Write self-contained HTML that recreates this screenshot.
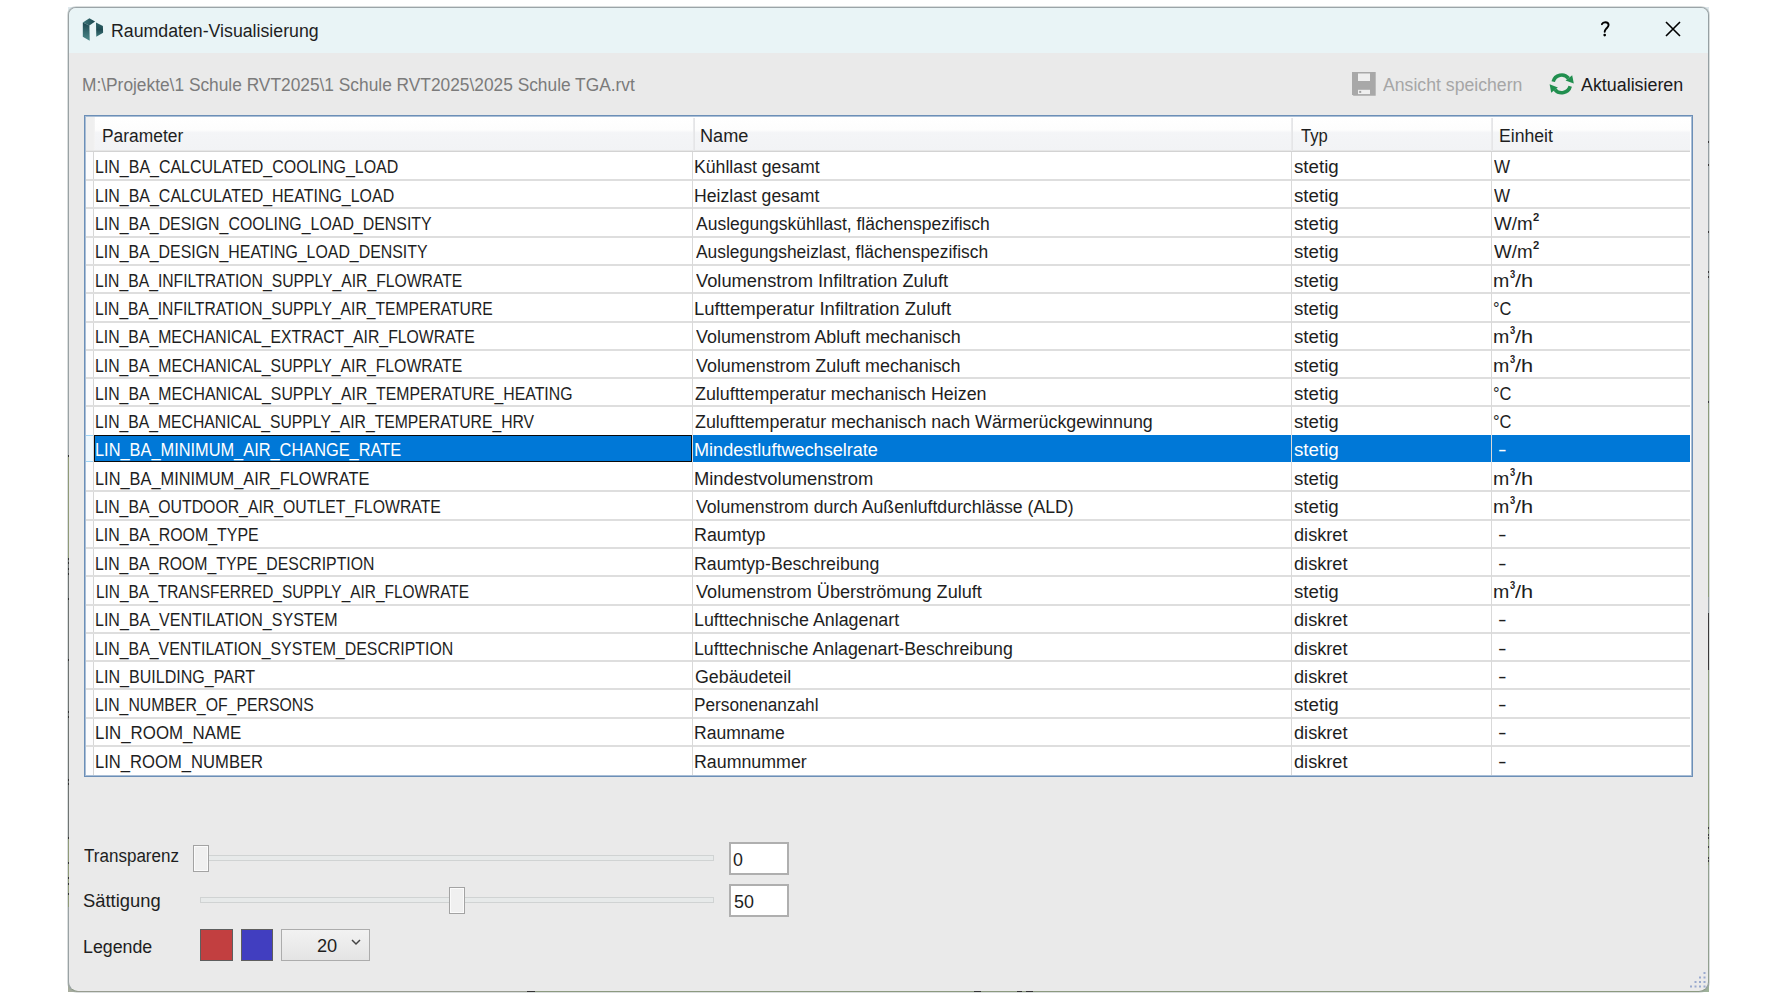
<!DOCTYPE html>
<html><head><meta charset="utf-8">
<style>
html,body{margin:0;padding:0;width:1778px;height:1000px;overflow:hidden;background:#fff;}
body{position:relative;font-family:"Liberation Sans",sans-serif;}
.abs{position:absolute;}
.t{position:absolute;white-space:pre;transform-origin:0 0;font-family:"Liberation Sans",sans-serif;}
#win{position:absolute;left:68px;top:7px;width:1639px;height:983px;border:1px solid;border-color:#9ba4a8 #96a0a3 #8a9884 #9aa2a4;box-shadow:0 0 0 1px rgba(150,160,160,0.35);border-radius:8px 8px 10px 10px;overflow:hidden;background:#eaeaea;}
#title{position:absolute;left:0;top:0;width:100%;height:45px;background:#e9f4f6;}
#table{position:absolute;left:84px;top:115px;width:1607px;height:660px;border:1px solid #6c8fb7;box-shadow:inset 0 0 0 1px #a9bed6;background:#fff;}
.hl{position:absolute;left:86px;width:1604px;height:2px;background:#dedede;}
.vl{position:absolute;width:1px;background:#d9d9d9;}
</style></head><body>
<div class="abs" style="left:68px;top:7px;width:10px;height:10px;background:#dfe8ec;"></div>
<div class="abs" style="left:1699px;top:7px;width:10px;height:10px;background:#dfe8ec;"></div>
<div class="abs" style="left:68px;top:982px;width:10px;height:10px;background:#a9ae9f;"></div>
<div class="abs" style="left:1699px;top:982px;width:10px;height:10px;background:#9fb39a;"></div>
<div id="win">
  <div id="title"></div>
</div>
<!-- border segments -->
<div class="abs" style="left:1708px;top:300px;width:1px;height:297px;background:#8c9c7c;"></div>
<div class="abs" style="left:1708px;top:613px;width:1px;height:57px;background:#3a3a3a;"></div>
<div class="abs" style="left:1708px;top:670px;width:1px;height:195px;background:#8c9c7c;"></div>
<div class="abs" style="left:1708px;top:865px;width:1px;height:118px;background:#92a090;"></div>
<div class="abs" style="left:68px;top:455px;width:1px;height:104px;background:#8f9a78;"></div>
<div class="abs" style="left:68px;top:559px;width:1px;height:278px;background:#6f7473;"></div>
<div class="abs" style="left:68px;top:837px;width:1px;height:70px;background:#8f9a78;"></div>
<div class="abs" style="left:535px;top:991px;width:1163px;height:1px;background:#8c9a80;"></div>
<div class="abs" style="left:76px;top:991px;width:451px;height:1px;background:#979c90;"></div>
<div class="abs" style="left:527px;top:991px;width:8px;height:1px;background:#333;"></div>
<div class="abs" style="left:974px;top:991px;width:7px;height:1px;background:#333;"></div>
<div class="abs" style="left:1017px;top:991px;width:5px;height:1px;background:#333;"></div>
<div class="abs" style="left:1026px;top:991px;width:7px;height:1px;background:#333;"></div>
<div class="abs" style="left:1708px;top:141px;width:1px;height:2px;background:#3a3a3a;"></div>
<div class="abs" style="left:1708px;top:164px;width:1px;height:2px;background:#3a3a3a;"></div>
<div class="abs" style="left:1708px;top:231px;width:1px;height:2px;background:#3a3a3a;"></div>
<div class="abs" style="left:1708px;top:271px;width:1px;height:2px;background:#3a3a3a;"></div>
<div class="abs" style="left:1708px;top:276px;width:1px;height:2px;background:#3a3a3a;"></div>
<div class="abs" style="left:1708px;top:401px;width:1px;height:2px;background:#3a3a3a;"></div>
<div class="abs" style="left:1708px;top:827px;width:1px;height:2px;background:#3a3a3a;"></div>
<div class="abs" style="left:1708px;top:834px;width:1px;height:2px;background:#3a3a3a;"></div>
<div class="abs" style="left:1708px;top:837px;width:1px;height:2px;background:#3a3a3a;"></div>
<div class="abs" style="left:1708px;top:846px;width:1px;height:2px;background:#3a3a3a;"></div>
<div class="abs" style="left:1708px;top:857px;width:1px;height:2px;background:#3a3a3a;"></div>
<div class="abs" style="left:1708px;top:860px;width:1px;height:2px;background:#3a3a3a;"></div>
<div class="abs" style="left:68px;top:455px;width:1px;height:2px;background:#333;"></div>
<div class="abs" style="left:68px;top:558px;width:1px;height:2px;background:#333;"></div>
<div class="abs" style="left:68px;top:562px;width:1px;height:2px;background:#333;"></div>
<div class="abs" style="left:68px;top:568px;width:1px;height:2px;background:#333;"></div>
<div class="abs" style="left:68px;top:573px;width:1px;height:2px;background:#333;"></div>
<div class="abs" style="left:68px;top:598px;width:1px;height:2px;background:#333;"></div>
<div class="abs" style="left:68px;top:659px;width:1px;height:2px;background:#333;"></div>
<div class="abs" style="left:68px;top:711px;width:1px;height:2px;background:#333;"></div>
<div class="abs" style="left:68px;top:716px;width:1px;height:2px;background:#333;"></div>
<div class="abs" style="left:68px;top:779px;width:1px;height:2px;background:#333;"></div>
<div class="abs" style="left:68px;top:783px;width:1px;height:2px;background:#333;"></div>
<div class="abs" style="left:68px;top:837px;width:1px;height:2px;background:#333;"></div>
<div class="abs" style="left:68px;top:862px;width:1px;height:2px;background:#333;"></div>
<div class="abs" style="left:68px;top:877px;width:1px;height:2px;background:#333;"></div>
<div class="abs" style="left:68px;top:883px;width:1px;height:2px;background:#333;"></div>
<div class="abs" style="left:68px;top:893px;width:1px;height:2px;background:#333;"></div>
<!-- resize grip -->
<svg class="abs" style="left:1688px;top:970px" width="18" height="18" viewBox="0 0 18 18"><g fill="#9aaace"><rect x="15.5" y="2.0" width="2" height="2"/><rect x="11.0" y="6.5" width="2" height="2"/><rect x="15.5" y="6.5" width="2" height="2"/><rect x="6.5" y="11.0" width="2" height="2"/><rect x="11.0" y="11.0" width="2" height="2"/><rect x="15.5" y="11.0" width="2" height="2"/><rect x="2.0" y="15.5" width="2" height="2"/><rect x="6.5" y="15.5" width="2" height="2"/><rect x="11.0" y="15.5" width="2" height="2"/><rect x="15.5" y="15.5" width="2" height="2"/></g></svg>
<div id="table"></div>
<!-- header -->
<div class="abs" style="left:86px;top:117px;width:1604px;height:34px;background:linear-gradient(#ffffff 0%,#fdfdfd 38%,#f4f5f7 46%,#f2f3f5 100%);"></div>
<div class="abs" style="left:86px;top:117px;width:9px;height:34px;background:linear-gradient(90deg,#efefef 0%,#efefef 80%,#f4f4f4 100%);"></div>
<div class="abs" style="left:86px;top:151px;width:1604px;height:1px;background:#d3d3d3;"></div>
<div class="abs" style="left:86px;top:150px;width:1604px;height:1px;background:#e6e6e6;"></div>
<!-- row header column -->
<div class="abs" style="left:86px;top:152px;width:7px;height:623px;background:#fcfcfd;"></div>
<div class="vl" style="left:93px;top:152px;height:623px;background:#d6d6d6;"></div>
<div class="abs" style="left:693px;top:118px;width:2px;height:33px;background:linear-gradient(90deg,#ececee,#e2e3e5);"></div>
<div class="abs" style="left:1291px;top:118px;width:2px;height:33px;background:linear-gradient(90deg,#ececee,#e2e3e5);"></div>
<div class="abs" style="left:1491px;top:118px;width:2px;height:33px;background:linear-gradient(90deg,#ececee,#e2e3e5);"></div>
<div class="hl" style="top:179px"></div>
<div class="hl" style="top:207px"></div>
<div class="hl" style="top:236px"></div>
<div class="hl" style="top:264px"></div>
<div class="hl" style="top:292px"></div>
<div class="hl" style="top:321px"></div>
<div class="hl" style="top:349px"></div>
<div class="hl" style="top:377px"></div>
<div class="hl" style="top:405px"></div>
<div class="hl" style="top:490px"></div>
<div class="hl" style="top:519px"></div>
<div class="hl" style="top:547px"></div>
<div class="hl" style="top:575px"></div>
<div class="hl" style="top:604px"></div>
<div class="hl" style="top:632px"></div>
<div class="hl" style="top:660px"></div>
<div class="hl" style="top:688px"></div>
<div class="hl" style="top:717px"></div>
<div class="hl" style="top:745px"></div>
<div class="vl" style="left:692px;top:152px;height:623px;"></div>
<div class="vl" style="left:1291px;top:152px;height:623px;"></div>
<div class="vl" style="left:1491px;top:152px;height:623px;"></div>
<!-- selection -->
<div class="abs" style="left:94px;top:435px;width:1596px;height:27px;background:#0078d7;"></div>
<div class="vl" style="left:692px;top:435px;height:27px;background:#d9d9d9;"></div>
<div class="vl" style="left:1291px;top:435px;height:27px;background:#d9d9d9;"></div>
<div class="vl" style="left:1491px;top:435px;height:27px;background:#d9d9d9;"></div>
<div class="abs" style="left:94px;top:435px;width:596px;height:25px;border:1px solid #0a0a0a;"></div>
<div class="abs" style="left:86px;top:435px;width:7px;height:27px;background:#eef7fd;border-top:1px solid #9fd3f5;border-bottom:1px solid #9fd3f5;box-sizing:border-box;"></div>
<!-- app icon -->
<svg class="abs" style="left:80px;top:16px" width="26" height="28" viewBox="0 0 26 28">
  <defs>
  <linearGradient id="g0" x1="0" y1="0" x2="1" y2="0"><stop offset="0" stop-color="#3f7a7d"/><stop offset="1" stop-color="#1a444c"/></linearGradient>
  <linearGradient id="g1" x1="0" y1="0" x2="0" y2="1"><stop offset="0" stop-color="#1c4750"/><stop offset="1" stop-color="#4e8b8c"/></linearGradient>
  <linearGradient id="g2" x1="0" y1="0" x2="0" y2="1"><stop offset="0" stop-color="#2f6469"/><stop offset="0.5" stop-color="#1f4b52"/><stop offset="1" stop-color="#40797c"/></linearGradient></defs>
  <path d="M2.8 6.5 L9.4 2.2 L15.1 5.5 L9.4 9.5 Z" fill="url(#g0)"/>
  <path d="M2.8 6.6 L9.4 9.4 L9.7 24.7 L2.8 20.8 Z" fill="url(#g1)"/>
  <path d="M16 6.4 L22.9 10 L23.1 16.8 L16.3 20.8 Z" fill="url(#g2)"/>
</svg>
<!-- help ? -->
<svg class="abs" style="left:1598px;top:18px" width="14" height="22" viewBox="0 0 14 22">
  <path d="M3.9 6.2 C4.6 4.7 6 4.2 7.3 4.2 C9.3 4.2 10.6 5.4 10.6 7.1 C10.6 8.8 9.2 9.7 8.1 10.8 C7.1 11.8 6.7 12.6 6.7 13.8" stroke="#000" stroke-width="1.9" fill="none" stroke-linecap="round"/>
  <circle cx="6.7" cy="17.1" r="1.35" fill="#000"/>
</svg>
<!-- close X -->
<svg class="abs" style="left:1664px;top:20px" width="18" height="18" viewBox="0 0 18 18">
  <path d="M2 2 L16 16 M16 2 L2 16" stroke="#000" stroke-width="1.6" fill="none"/>
</svg>
<!-- floppy -->
<svg class="abs" style="left:1352px;top:72px" width="24" height="24" viewBox="0 0 24 24">
  <path d="M0 0 H23.7 V23.7 H1.5 L0 22.2 Z" fill="#a8a8a8"/>
  <rect x="6" y="1.5" width="12" height="7.5" fill="#efefef"/>
  <rect x="6" y="17.8" width="12" height="4.3" fill="#efefef"/>
  <rect x="7.2" y="18.9" width="2" height="2" fill="#a0a0a0"/>
</svg>
<!-- refresh -->
<svg class="abs" style="left:1549px;top:72px" width="26" height="24" viewBox="0 0 26 24">
  <path d="M4.2 9.62 A8.8 8.8 0 0 1 19.44 6.24" stroke="#218f4f" stroke-width="3.6" fill="none"/>
  <path d="M23.2 3.15 L24.77 11.55 L16.55 8.4 Z" fill="#218f4f"/>
  <path d="M21.2 14.18 A8.8 8.8 0 0 1 5.96 17.56" stroke="#218f4f" stroke-width="3.6" fill="none"/>
  <path d="M2.2 20.65 L0.63 12.25 L8.85 15.4 Z" fill="#218f4f"/>
</svg>
<!-- sliders -->
<div class="abs" style="left:200px;top:855px;width:512px;height:4px;background:#e7eaea;border:1px solid #d0d3d3;"></div>
<div class="abs" style="left:193px;top:845px;width:14px;height:25px;background:#f0f0f0;border:1px solid #a3a3a3;box-shadow:inset 0 0 0 1px #fbfbfb;"></div>
<div class="abs" style="left:200px;top:897px;width:512px;height:4px;background:#e7eaea;border:1px solid #d0d3d3;"></div>
<div class="abs" style="left:449px;top:887px;width:14px;height:25px;background:#f0f0f0;border:1px solid #a3a3a3;box-shadow:inset 0 0 0 1px #fbfbfb;"></div>
<!-- textboxes -->
<div class="abs" style="left:729px;top:842px;width:56px;height:29px;background:#fff;border:2px solid #afafaf;"></div>
<div class="abs" style="left:729px;top:884px;width:56px;height:29px;background:#fff;border:2px solid #afafaf;"></div>
<!-- legend -->
<div class="abs" style="left:200px;top:929px;width:31px;height:30px;background:#c23f40;border:1px solid #5e5e5e;"></div>
<div class="abs" style="left:241px;top:929px;width:30px;height:30px;background:#413ec0;border:1px solid #5e5e5e;"></div>
<div class="abs" style="left:281px;top:929px;width:87px;height:30px;background:linear-gradient(#f2f2f2,#e4e4e4);border:1px solid #acacac;"></div>
<svg class="abs" style="left:350px;top:937px" width="12" height="10" viewBox="0 0 12 10">
  <path d="M2 3 L6 7 L10 3" stroke="#444" stroke-width="1.5" fill="none"/>
</svg>
<div class="t" style="left:110.82px;top:20.70px;font-size:18px;line-height:20px;color:#1e1e1e;transform:scaleX(0.9851);">Raumdaten-Visualisierung</div>
<div class="t" style="left:82.06px;top:75.30px;font-size:18px;line-height:20px;color:#7b7b7b;transform:scaleX(0.9625);">M:\Projekte\1 Schule RVT2025\1 Schule RVT2025\2025 Schule TGA.rvt</div>
<div class="t" style="left:1383.40px;top:75.40px;font-size:18px;line-height:20px;color:#a6a6a6;transform:scaleX(0.9808);">Ansicht speichern</div>
<div class="t" style="left:1580.90px;top:75.40px;font-size:18px;line-height:20px;color:#1b1b1b;transform:scaleX(0.9921);">Aktualisieren</div>
<div class="t" style="left:101.55px;top:126.00px;font-size:18px;line-height:20px;color:#1e1e1e;transform:scaleX(0.9660);">Parameter</div>
<div class="t" style="left:699.89px;top:126.00px;font-size:18px;line-height:20px;color:#1e1e1e;transform:scaleX(1.0088);">Name</div>
<div class="t" style="left:1300.73px;top:126.00px;font-size:18px;line-height:20px;color:#1e1e1e;transform:scaleX(0.9247);">Typ</div>
<div class="t" style="left:1498.73px;top:126.00px;font-size:18px;line-height:20px;color:#1e1e1e;transform:scaleX(0.9794);">Einheit</div>
<div class="t" style="left:95.47px;top:157.40px;font-size:18px;line-height:20px;color:#1e1e1e;transform:scaleX(0.8874);">LIN_BA_CALCULATED_COOLING_LOAD</div>
<div class="t" style="left:694.13px;top:157.40px;font-size:18px;line-height:20px;color:#1e1e1e;transform:scaleX(0.9818);">Kühllast gesamt</div>
<div class="t" style="left:1293.78px;top:157.40px;font-size:18px;line-height:20px;color:#1e1e1e;transform:scaleX(1.0411);">stetig</div>
<div class="t" style="left:1493.81px;top:157.40px;font-size:18px;line-height:20px;color:#1e1e1e;transform:scaleX(0.9464);">W</div>
<div class="t" style="left:95.47px;top:185.70px;font-size:18px;line-height:20px;color:#1e1e1e;transform:scaleX(0.8866);">LIN_BA_CALCULATED_HEATING_LOAD</div>
<div class="t" style="left:694.13px;top:185.70px;font-size:18px;line-height:20px;color:#1e1e1e;transform:scaleX(0.9794);">Heizlast gesamt</div>
<div class="t" style="left:1293.78px;top:185.70px;font-size:18px;line-height:20px;color:#1e1e1e;transform:scaleX(1.0411);">stetig</div>
<div class="t" style="left:1493.81px;top:185.70px;font-size:18px;line-height:20px;color:#1e1e1e;transform:scaleX(0.9464);">W</div>
<div class="t" style="left:95.48px;top:214.00px;font-size:18px;line-height:20px;color:#1e1e1e;transform:scaleX(0.8832);">LIN_BA_DESIGN_COOLING_LOAD_DENSITY</div>
<div class="t" style="left:695.50px;top:214.00px;font-size:18px;line-height:20px;color:#1e1e1e;transform:scaleX(0.9721);">Auslegungskühllast, flächenspezifisch</div>
<div class="t" style="left:1293.78px;top:214.00px;font-size:18px;line-height:20px;color:#1e1e1e;transform:scaleX(1.0411);">stetig</div>
<div class="t" style="left:1493.80px;top:214.00px;font-size:18px;line-height:20px;color:#1e1e1e;transform:scaleX(1.0448);">W/m</div>
<div class="t" style="left:1532.59px;top:211.00px;font-size:11px;line-height:12px;color:#1e1e1e;transform:scaleX(1.0189);font-weight:bold;">2</div>
<div class="t" style="left:95.48px;top:242.30px;font-size:18px;line-height:20px;color:#1e1e1e;transform:scaleX(0.8826);">LIN_BA_DESIGN_HEATING_LOAD_DENSITY</div>
<div class="t" style="left:695.50px;top:242.30px;font-size:18px;line-height:20px;color:#1e1e1e;transform:scaleX(0.9668);">Auslegungsheizlast, flächenspezifisch</div>
<div class="t" style="left:1293.78px;top:242.30px;font-size:18px;line-height:20px;color:#1e1e1e;transform:scaleX(1.0411);">stetig</div>
<div class="t" style="left:1493.80px;top:242.30px;font-size:18px;line-height:20px;color:#1e1e1e;transform:scaleX(1.0448);">W/m</div>
<div class="t" style="left:1532.59px;top:239.30px;font-size:11px;line-height:12px;color:#1e1e1e;transform:scaleX(1.0189);font-weight:bold;">2</div>
<div class="t" style="left:95.49px;top:270.60px;font-size:18px;line-height:20px;color:#1e1e1e;transform:scaleX(0.8729);">LIN_BA_INFILTRATION_SUPPLY_AIR_FLOWRATE</div>
<div class="t" style="left:695.50px;top:270.60px;font-size:18px;line-height:20px;color:#1e1e1e;transform:scaleX(1.0165);">Volumenstrom Infiltration Zuluft</div>
<div class="t" style="left:1293.78px;top:270.60px;font-size:18px;line-height:20px;color:#1e1e1e;transform:scaleX(1.0411);">stetig</div>
<div class="t" style="left:1492.70px;top:270.60px;font-size:18px;line-height:20px;color:#1e1e1e;transform:scaleX(1.0873);">m</div>
<div class="t" style="left:1509.54px;top:267.60px;font-size:11px;line-height:12px;color:#1e1e1e;transform:scaleX(0.8519);font-weight:bold;">3</div>
<div class="t" style="left:1515.00px;top:270.60px;font-size:18px;line-height:20px;color:#1e1e1e;transform:scaleX(1.2086);">/h</div>
<div class="t" style="left:95.49px;top:298.90px;font-size:18px;line-height:20px;color:#1e1e1e;transform:scaleX(0.8706);">LIN_BA_INFILTRATION_SUPPLY_AIR_TEMPERATURE</div>
<div class="t" style="left:694.06px;top:298.90px;font-size:18px;line-height:20px;color:#1e1e1e;transform:scaleX(1.0278);">Lufttemperatur Infiltration Zuluft</div>
<div class="t" style="left:1293.78px;top:298.90px;font-size:18px;line-height:20px;color:#1e1e1e;transform:scaleX(1.0411);">stetig</div>
<div class="t" style="left:1493.20px;top:298.90px;font-size:18px;line-height:20px;color:#1e1e1e;transform:scaleX(0.9130);">°C</div>
<div class="t" style="left:95.48px;top:327.20px;font-size:18px;line-height:20px;color:#1e1e1e;transform:scaleX(0.8774);">LIN_BA_MECHANICAL_EXTRACT_AIR_FLOWRATE</div>
<div class="t" style="left:695.50px;top:327.20px;font-size:18px;line-height:20px;color:#1e1e1e;transform:scaleX(0.9944);">Volumenstrom Abluft mechanisch</div>
<div class="t" style="left:1293.78px;top:327.20px;font-size:18px;line-height:20px;color:#1e1e1e;transform:scaleX(1.0411);">stetig</div>
<div class="t" style="left:1492.70px;top:327.20px;font-size:18px;line-height:20px;color:#1e1e1e;transform:scaleX(1.0873);">m</div>
<div class="t" style="left:1509.54px;top:324.20px;font-size:11px;line-height:12px;color:#1e1e1e;transform:scaleX(0.8519);font-weight:bold;">3</div>
<div class="t" style="left:1515.00px;top:327.20px;font-size:18px;line-height:20px;color:#1e1e1e;transform:scaleX(1.2086);">/h</div>
<div class="t" style="left:95.48px;top:355.50px;font-size:18px;line-height:20px;color:#1e1e1e;transform:scaleX(0.8777);">LIN_BA_MECHANICAL_SUPPLY_AIR_FLOWRATE</div>
<div class="t" style="left:695.50px;top:355.50px;font-size:18px;line-height:20px;color:#1e1e1e;transform:scaleX(0.9940);">Volumenstrom Zuluft mechanisch</div>
<div class="t" style="left:1293.78px;top:355.50px;font-size:18px;line-height:20px;color:#1e1e1e;transform:scaleX(1.0411);">stetig</div>
<div class="t" style="left:1492.70px;top:355.50px;font-size:18px;line-height:20px;color:#1e1e1e;transform:scaleX(1.0873);">m</div>
<div class="t" style="left:1509.54px;top:352.50px;font-size:11px;line-height:12px;color:#1e1e1e;transform:scaleX(0.8519);font-weight:bold;">3</div>
<div class="t" style="left:1515.00px;top:355.50px;font-size:18px;line-height:20px;color:#1e1e1e;transform:scaleX(1.2086);">/h</div>
<div class="t" style="left:95.48px;top:383.80px;font-size:18px;line-height:20px;color:#1e1e1e;transform:scaleX(0.8790);">LIN_BA_MECHANICAL_SUPPLY_AIR_TEMPERATURE_HEATING</div>
<div class="t" style="left:695.01px;top:383.80px;font-size:18px;line-height:20px;color:#1e1e1e;transform:scaleX(0.9911);">Zulufttemperatur mechanisch Heizen</div>
<div class="t" style="left:1293.78px;top:383.80px;font-size:18px;line-height:20px;color:#1e1e1e;transform:scaleX(1.0411);">stetig</div>
<div class="t" style="left:1493.20px;top:383.80px;font-size:18px;line-height:20px;color:#1e1e1e;transform:scaleX(0.9130);">°C</div>
<div class="t" style="left:95.49px;top:412.10px;font-size:18px;line-height:20px;color:#1e1e1e;transform:scaleX(0.8744);">LIN_BA_MECHANICAL_SUPPLY_AIR_TEMPERATURE_HRV</div>
<div class="t" style="left:695.00px;top:412.10px;font-size:18px;line-height:20px;color:#1e1e1e;transform:scaleX(0.9926);">Zulufttemperatur mechanisch nach Wärmerückgewinnung</div>
<div class="t" style="left:1293.78px;top:412.10px;font-size:18px;line-height:20px;color:#1e1e1e;transform:scaleX(1.0411);">stetig</div>
<div class="t" style="left:1493.20px;top:412.10px;font-size:18px;line-height:20px;color:#1e1e1e;transform:scaleX(0.9130);">°C</div>
<div class="t" style="left:95.44px;top:440.40px;font-size:18px;line-height:20px;color:#fff;transform:scaleX(0.9091);">LIN_BA_MINIMUM_AIR_CHANGE_RATE</div>
<div class="t" style="left:694.09px;top:440.40px;font-size:18px;line-height:20px;color:#fff;transform:scaleX(1.0044);">Mindestluftwechselrate</div>
<div class="t" style="left:1293.78px;top:440.40px;font-size:18px;line-height:20px;color:#fff;transform:scaleX(1.0411);">stetig</div>
<div class="t" style="left:1497.75px;top:440.40px;font-size:18px;line-height:20px;color:#fff;transform:scaleX(1.4318);">-</div>
<div class="t" style="left:95.44px;top:468.70px;font-size:18px;line-height:20px;color:#1e1e1e;transform:scaleX(0.9095);">LIN_BA_MINIMUM_AIR_FLOWRATE</div>
<div class="t" style="left:694.07px;top:468.70px;font-size:18px;line-height:20px;color:#1e1e1e;transform:scaleX(1.0185);">Mindestvolumenstrom</div>
<div class="t" style="left:1293.78px;top:468.70px;font-size:18px;line-height:20px;color:#1e1e1e;transform:scaleX(1.0411);">stetig</div>
<div class="t" style="left:1492.70px;top:468.70px;font-size:18px;line-height:20px;color:#1e1e1e;transform:scaleX(1.0873);">m</div>
<div class="t" style="left:1509.54px;top:465.70px;font-size:11px;line-height:12px;color:#1e1e1e;transform:scaleX(0.8519);font-weight:bold;">3</div>
<div class="t" style="left:1515.00px;top:468.70px;font-size:18px;line-height:20px;color:#1e1e1e;transform:scaleX(1.2086);">/h</div>
<div class="t" style="left:95.48px;top:497.00px;font-size:18px;line-height:20px;color:#1e1e1e;transform:scaleX(0.8784);">LIN_BA_OUTDOOR_AIR_OUTLET_FLOWRATE</div>
<div class="t" style="left:695.50px;top:497.00px;font-size:18px;line-height:20px;color:#1e1e1e;transform:scaleX(0.9805);">Volumenstrom durch Außenluftdurchlässe (ALD)</div>
<div class="t" style="left:1293.78px;top:497.00px;font-size:18px;line-height:20px;color:#1e1e1e;transform:scaleX(1.0411);">stetig</div>
<div class="t" style="left:1492.70px;top:497.00px;font-size:18px;line-height:20px;color:#1e1e1e;transform:scaleX(1.0873);">m</div>
<div class="t" style="left:1509.54px;top:494.00px;font-size:11px;line-height:12px;color:#1e1e1e;transform:scaleX(0.8519);font-weight:bold;">3</div>
<div class="t" style="left:1515.00px;top:497.00px;font-size:18px;line-height:20px;color:#1e1e1e;transform:scaleX(1.2086);">/h</div>
<div class="t" style="left:95.47px;top:525.30px;font-size:18px;line-height:20px;color:#1e1e1e;transform:scaleX(0.8846);">LIN_BA_ROOM_TYPE</div>
<div class="t" style="left:694.11px;top:525.30px;font-size:18px;line-height:20px;color:#1e1e1e;transform:scaleX(0.9928);">Raumtyp</div>
<div class="t" style="left:1293.59px;top:525.30px;font-size:18px;line-height:20px;color:#1e1e1e;transform:scaleX(1.0096);">diskret</div>
<div class="t" style="left:1497.75px;top:525.30px;font-size:18px;line-height:20px;color:#1e1e1e;transform:scaleX(1.4318);">-</div>
<div class="t" style="left:95.48px;top:553.60px;font-size:18px;line-height:20px;color:#1e1e1e;transform:scaleX(0.8785);">LIN_BA_ROOM_TYPE_DESCRIPTION</div>
<div class="t" style="left:694.12px;top:553.60px;font-size:18px;line-height:20px;color:#1e1e1e;transform:scaleX(0.9854);">Raumtyp-Beschreibung</div>
<div class="t" style="left:1293.59px;top:553.60px;font-size:18px;line-height:20px;color:#1e1e1e;transform:scaleX(1.0096);">diskret</div>
<div class="t" style="left:1497.75px;top:553.60px;font-size:18px;line-height:20px;color:#1e1e1e;transform:scaleX(1.4318);">-</div>
<div class="t" style="left:95.52px;top:581.90px;font-size:18px;line-height:20px;color:#1e1e1e;transform:scaleX(0.8566);">LIN_BA_TRANSFERRED_SUPPLY_AIR_FLOWRATE</div>
<div class="t" style="left:695.50px;top:581.90px;font-size:18px;line-height:20px;color:#1e1e1e;transform:scaleX(1.0063);">Volumenstrom Überströmung Zuluft</div>
<div class="t" style="left:1293.78px;top:581.90px;font-size:18px;line-height:20px;color:#1e1e1e;transform:scaleX(1.0411);">stetig</div>
<div class="t" style="left:1492.70px;top:581.90px;font-size:18px;line-height:20px;color:#1e1e1e;transform:scaleX(1.0873);">m</div>
<div class="t" style="left:1509.54px;top:578.90px;font-size:11px;line-height:12px;color:#1e1e1e;transform:scaleX(0.8519);font-weight:bold;">3</div>
<div class="t" style="left:1515.00px;top:581.90px;font-size:18px;line-height:20px;color:#1e1e1e;transform:scaleX(1.2086);">/h</div>
<div class="t" style="left:95.47px;top:610.20px;font-size:18px;line-height:20px;color:#1e1e1e;transform:scaleX(0.8895);">LIN_BA_VENTILATION_SYSTEM</div>
<div class="t" style="left:694.11px;top:610.20px;font-size:18px;line-height:20px;color:#1e1e1e;transform:scaleX(0.9903);">Lufttechnische Anlagenart</div>
<div class="t" style="left:1293.59px;top:610.20px;font-size:18px;line-height:20px;color:#1e1e1e;transform:scaleX(1.0096);">diskret</div>
<div class="t" style="left:1497.75px;top:610.20px;font-size:18px;line-height:20px;color:#1e1e1e;transform:scaleX(1.4318);">-</div>
<div class="t" style="left:95.48px;top:638.50px;font-size:18px;line-height:20px;color:#1e1e1e;transform:scaleX(0.8831);">LIN_BA_VENTILATION_SYSTEM_DESCRIPTION</div>
<div class="t" style="left:694.12px;top:638.50px;font-size:18px;line-height:20px;color:#1e1e1e;transform:scaleX(0.9863);">Lufttechnische Anlagenart-Beschreibung</div>
<div class="t" style="left:1293.59px;top:638.50px;font-size:18px;line-height:20px;color:#1e1e1e;transform:scaleX(1.0096);">diskret</div>
<div class="t" style="left:1497.75px;top:638.50px;font-size:18px;line-height:20px;color:#1e1e1e;transform:scaleX(1.4318);">-</div>
<div class="t" style="left:95.46px;top:666.80px;font-size:18px;line-height:20px;color:#1e1e1e;transform:scaleX(0.8924);">LIN_BUILDING_PART</div>
<div class="t" style="left:694.71px;top:666.80px;font-size:18px;line-height:20px;color:#1e1e1e;transform:scaleX(0.9905);">Gebäudeteil</div>
<div class="t" style="left:1293.59px;top:666.80px;font-size:18px;line-height:20px;color:#1e1e1e;transform:scaleX(1.0096);">diskret</div>
<div class="t" style="left:1497.75px;top:666.80px;font-size:18px;line-height:20px;color:#1e1e1e;transform:scaleX(1.4318);">-</div>
<div class="t" style="left:95.48px;top:695.10px;font-size:18px;line-height:20px;color:#1e1e1e;transform:scaleX(0.8780);">LIN_NUMBER_OF_PERSONS</div>
<div class="t" style="left:694.16px;top:695.10px;font-size:18px;line-height:20px;color:#1e1e1e;transform:scaleX(0.9568);">Personenanzahl</div>
<div class="t" style="left:1293.78px;top:695.10px;font-size:18px;line-height:20px;color:#1e1e1e;transform:scaleX(1.0411);">stetig</div>
<div class="t" style="left:1497.75px;top:695.10px;font-size:18px;line-height:20px;color:#1e1e1e;transform:scaleX(1.4318);">-</div>
<div class="t" style="left:95.39px;top:723.40px;font-size:18px;line-height:20px;color:#1e1e1e;transform:scaleX(0.9369);">LIN_ROOM_NAME</div>
<div class="t" style="left:694.14px;top:723.40px;font-size:18px;line-height:20px;color:#1e1e1e;transform:scaleX(0.9746);">Raumname</div>
<div class="t" style="left:1293.59px;top:723.40px;font-size:18px;line-height:20px;color:#1e1e1e;transform:scaleX(1.0096);">diskret</div>
<div class="t" style="left:1497.75px;top:723.40px;font-size:18px;line-height:20px;color:#1e1e1e;transform:scaleX(1.4318);">-</div>
<div class="t" style="left:95.42px;top:751.70px;font-size:18px;line-height:20px;color:#1e1e1e;transform:scaleX(0.9232);">LIN_ROOM_NUMBER</div>
<div class="t" style="left:694.12px;top:751.70px;font-size:18px;line-height:20px;color:#1e1e1e;transform:scaleX(0.9884);">Raumnummer</div>
<div class="t" style="left:1293.59px;top:751.70px;font-size:18px;line-height:20px;color:#1e1e1e;transform:scaleX(1.0096);">diskret</div>
<div class="t" style="left:1497.75px;top:751.70px;font-size:18px;line-height:20px;color:#1e1e1e;transform:scaleX(1.4318);">-</div>
<div class="t" style="left:83.62px;top:845.50px;font-size:18px;line-height:20px;color:#1e1e1e;transform:scaleX(0.9465);">Transparenz</div>
<div class="t" style="left:83.18px;top:891.00px;font-size:18px;line-height:20px;color:#1e1e1e;transform:scaleX(1.0202);">Sättigung</div>
<div class="t" style="left:82.52px;top:936.50px;font-size:18px;line-height:20px;color:#1e1e1e;transform:scaleX(0.9882);">Legende</div>
<div class="t" style="left:733.31px;top:850.00px;font-size:18px;line-height:20px;color:#1e1e1e;transform:scaleX(0.9884);">0</div>
<div class="t" style="left:733.80px;top:891.80px;font-size:18px;line-height:20px;color:#1e1e1e;transform:scaleX(0.9946);">50</div>
<div class="t" style="left:317.39px;top:936.30px;font-size:18px;line-height:20px;color:#1e1e1e;transform:scaleX(1.0109);">20</div>
</body></html>
